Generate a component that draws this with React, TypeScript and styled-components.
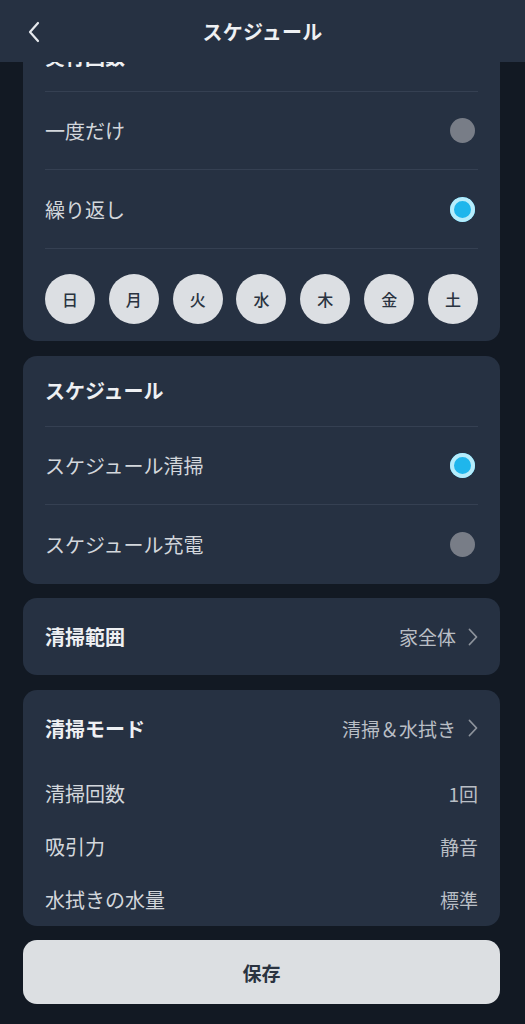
import React, { useLayoutEffect, useRef } from "react";
import styled, { createGlobalStyle } from "styled-components";

const Global = createGlobalStyle`
  html, body { margin: 0; padding: 0; background: #121923; }
  body { font-family: "Noto Sans CJK JP", "Noto Sans", sans-serif; }
  * { box-sizing: border-box; }
`;

const Screen = styled.div`
  width: 525px;
  height: 1024px;
  overflow-y: auto;
  background: #121923;
  scrollbar-width: none;
  &::-webkit-scrollbar { display: none; }
`;

const Header = styled.header`
  position: sticky;
  top: 0;
  z-index: 2;
  height: 62px;
  background: #263142;
  display: flex;
  align-items: center;
  justify-content: center;
`;

const BackButton = styled.button`
  position: absolute;
  left: 22px;
  top: 19px;
  width: 24px;
  height: 26px;
  padding: 0;
  border: 0;
  background: none;
  display: flex;
  align-items: center;
  justify-content: center;
`;

const Title = styled.h1`
  margin: 0;
  font-size: 20px;
  font-weight: 700;
  color: #eef0f3;
  letter-spacing: 0.2px;
`;

const Content = styled.main`
  display: flex;
  flex-direction: column;
  gap: 14.5px;
  padding: 16px 25px 20px 23px;
`;

const Card = styled.section`
  background: #263142;
  border-radius: 14px;
  padding: 0 22px;
  display: flex;
  flex-direction: column;
`;

const Row = styled.div<{ $h: number; $divider?: boolean }>`
  height: ${(p) => p.$h}px;
  display: flex;
  align-items: center;
  justify-content: space-between;
  border-bottom: ${(p) => (p.$divider ? "1px solid #354052" : "none")};
`;

const Label = styled.span<{ $bold?: boolean }>`
  font-size: 20px;
  font-weight: ${(p) => (p.$bold ? 700 : 400)};
  color: ${(p) => (p.$bold ? "#eef0f3" : "#d3d7dc")};
`;

const Value = styled.span`
  display: flex;
  align-items: center;
  gap: 12px;
  font-size: 19px;
  color: #b9bec5;
`;

const Radio = styled.span<{ $on?: boolean }>`
  width: 25px;
  height: 25px;
  border-radius: 50%;
  margin-right: 3px;
  background: ${(p) => (p.$on ? "#1fb6ec" : "#787d87")};
  box-shadow: ${(p) => (p.$on ? "inset 0 0 0 4px #b6ecfb" : "none")};
`;

const Days = styled.div`
  display: flex;
  justify-content: space-between;
  padding: 25px 0 17px;
`;

const Day = styled.span`
  width: 50px;
  height: 50px;
  border-radius: 50%;
  background: #dcdfe3;
  color: #2a3340;
  font-size: 16px;
  font-weight: 500;
  display: flex;
  align-items: center;
  justify-content: center;
`;

const SaveButton = styled.button`
  height: 64px;
  border: 0;
  border-radius: 14px;
  background: #dcdfe2;
  color: #2a3340;
  font-family: inherit;
  font-size: 19px;
  font-weight: 700;
`;

const Chevron = () => (
  <svg width="10" height="18" viewBox="0 0 10 18" fill="none">
    <path d="M1.5 1.5L8.5 9L1.5 16.5" stroke="#8d939c" strokeWidth="1.8" strokeLinecap="round" strokeLinejoin="round" />
  </svg>
);

export default function App() {
  const ref = useRef<HTMLDivElement>(null);
  useLayoutEffect(() => {
    if (ref.current) ref.current.scrollTop = 56;
  }, []);
  const days = ["日", "月", "火", "水", "木", "金", "土"];
  return (
    <>
      <Global />
      <Screen ref={ref}>
        <Header>
          <BackButton aria-label="戻る">
            <svg width="14" height="22" viewBox="0 0 14 22" fill="none">
              <path d="M11 2L3 11L11 20" stroke="#e6e9ed" strokeWidth="2.2" strokeLinecap="round" strokeLinejoin="round" />
            </svg>
          </BackButton>
          <Title>スケジュール</Title>
        </Header>
        <Content>
          <Card>
            <Row $h={70} $divider>
              <Label $bold>実行回数</Label>
            </Row>
            <Row $h={78} $divider>
              <Label>一度だけ</Label>
              <Radio />
            </Row>
            <Row $h={79} $divider>
              <Label>繰り返し</Label>
              <Radio $on />
            </Row>
            <Days>
              {days.map((d) => (
                <Day key={d}>{d}</Day>
              ))}
            </Days>
          </Card>
          <Card>
            <Row $h={71} $divider>
              <Label $bold>スケジュール</Label>
            </Row>
            <Row $h={78} $divider>
              <Label>スケジュール清掃</Label>
              <Radio $on />
            </Row>
            <Row $h={79}>
              <Label>スケジュール充電</Label>
              <Radio />
            </Row>
          </Card>
          <Card>
            <Row $h={77}>
              <Label $bold>清掃範囲</Label>
              <Value>
                家全体
                <Chevron />
              </Value>
            </Row>
          </Card>
          <Card>
            <Row $h={77}>
              <Label $bold>清掃モード</Label>
              <Value>
                清掃＆水拭き
                <Chevron />
              </Value>
            </Row>
            <Row $h={53}>
              <Label>清掃回数</Label>
              <Value>1回</Value>
            </Row>
            <Row $h={53}>
              <Label>吸引力</Label>
              <Value>静音</Value>
            </Row>
            <Row $h={53}>
              <Label>水拭きの水量</Label>
              <Value>標準</Value>
            </Row>
          </Card>
          <SaveButton>保存</SaveButton>
        </Content>
      </Screen>
    </>
  );
}
